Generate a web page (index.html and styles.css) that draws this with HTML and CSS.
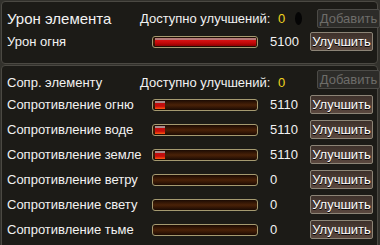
FILE: index.html
```html
<!DOCTYPE html>
<html>
<head>
<meta charset="utf-8">
<link rel="stylesheet" href="styles.css">
</head>
<body>
<div class="wrap">
  <section class="panel panel-top">
    <div class="head">
      <span class="title">Урон элемента</span>
      <span class="avail">Доступно улучшений:</span>
      <span class="count"><span class="num">0</span><span class="oval"></span></span>
      <button class="btn disabled">Добавить</button>
    </div>
    <div class="row">
      <span class="label">Урон огня</span>
      <div class="bar"><div class="fill" style="width:100%"></div></div>
      <span class="val">5100</span>
      <button class="btn">Улучшить</button>
    </div>
  </section>
  <section class="panel panel-bottom">
    <div class="head">
      <span class="title small">Сопр. элементу</span>
      <span class="avail">Доступно улучшений:</span>
      <span class="count"><span class="num">0</span></span>
      <button class="btn disabled">Добавить</button>
    </div>
    <div class="row">
      <span class="label">Сопротивление огню</span>
      <div class="bar"><div class="fill part" style="width:10px"></div></div>
      <span class="val">5110</span>
      <button class="btn">Улучшить</button>
    </div>
    <div class="row">
      <span class="label">Сопротивление воде</span>
      <div class="bar"><div class="fill part" style="width:10px"></div></div>
      <span class="val">5110</span>
      <button class="btn">Улучшить</button>
    </div>
    <div class="row">
      <span class="label">Сопротивление земле</span>
      <div class="bar"><div class="fill part" style="width:10px"></div></div>
      <span class="val">5110</span>
      <button class="btn">Улучшить</button>
    </div>
    <div class="row">
      <span class="label">Сопротивление ветру</span>
      <div class="bar"></div>
      <span class="val">0</span>
      <button class="btn">Улучшить</button>
    </div>
    <div class="row">
      <span class="label">Сопротивление свету</span>
      <div class="bar"></div>
      <span class="val">0</span>
      <button class="btn">Улучшить</button>
    </div>
    <div class="row">
      <span class="label">Сопротивление тьме</span>
      <div class="bar"></div>
      <span class="val">0</span>
      <button class="btn">Улучшить</button>
    </div>
  </section>
</div>
</body>
</html>
```
FILE: styles.css
```css
html, body {
  margin: 0;
  padding: 0;
  background: #32312c;
  overflow: hidden;
}
body {
  width: 380px;
  height: 245px;
  font-family: "Liberation Sans", Arial, sans-serif;
  font-size: 13px;
  color: #f2f2f2;
}
.wrap {
  padding: 1px 2px 0 1px;
  display: flex;
  flex-direction: column;
  gap: 1px;
}
.panel {
  background: #1c1b17;
  border: 1px solid #4b4943;
  border-radius: 4px;
  padding: 0 3px 0 5px;
}
.panel-top {
  padding-top: 5px;
  padding-bottom: 10px;
}
.panel-bottom {
  padding-top: 1px;
  padding-bottom: 10px;
  border-bottom-left-radius: 0;
  border-bottom-right-radius: 0;
}
.head {
  display: grid;
  grid-template-columns: 133px 138px 39px 63px;
  align-items: center;
  height: 23px;
}
.panel-bottom .head {
  height: 25px;
}
.title {
  font-size: 15px;
}
.title.small {
  font-size: 13px;
  padding-top: 6px;
}
.panel-bottom .avail, .panel-bottom .count {
  padding-top: 6px;
}
.count {
  display: flex;
  align-items: center;
  gap: 10px;
}
.num {
  color: #f0d41e;
}
.oval {
  width: 7px;
  height: 13px;
  border-radius: 50%;
  background: #050505;
}
.row {
  display: grid;
  grid-template-columns: 145px 106px 12px 40px 63px;
  align-items: center;
  height: 23px;
}
.panel-bottom .row {
  height: 25px;
}
.bar {
  grid-column: 2;
  height: 10px;
  border: 1px solid #a59a70;
  border-radius: 3px;
  background: linear-gradient(#1a0a03 0, #2f1405 20%, #4a2208 50%, #2f1405 80%, #1a0a03 100%);
  padding: 1px 1px 1px 2px;
  box-sizing: border-box;
  height: 12px;
  display: flex;
}
.fill {
  height: 100%;
  background: linear-gradient(#b57a7a 0, #b57a7a 20%, #d81414 25%, #c00808 65%, #8a0202 100%);
}
.fill.part {
  background: linear-gradient(#a88c8c 0, #a88c8c 25%, #c40c0c 30%, #c40c0c 65%, #ff5a10 100%);
}
.val {
  grid-column: 4;
}
.btn {
  grid-column: 5;
  width: 63px;
  height: 19px;
  margin: 0;
  padding: 0;
  font-family: "Liberation Sans", Arial, sans-serif;
  font-size: 13px;
  color: #ffffff;
  background: linear-gradient(#3e312b, #5a473e);
  border: 1px solid #8c8476;
  border-radius: 2px;
  text-shadow: 0 1px 0 #000;
}
.head .btn {
  grid-column: 4;
}
.btn.disabled {
  color: #6e6d69;
  background: #2d2c29;
  border-color: #4c4b47;
  text-shadow: none;
}
```
